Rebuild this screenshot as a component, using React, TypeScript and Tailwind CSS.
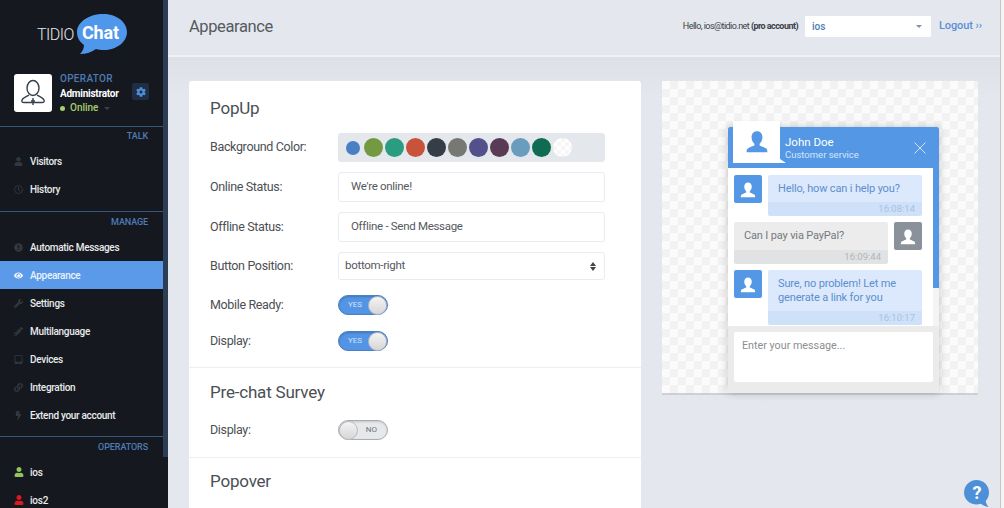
import { FaUser, FaRegClock, FaExclamationCircle, FaEye, FaWrench, FaPencilAlt, FaTabletAlt, FaLink, FaBolt, FaCog } from "react-icons/fa";
import type { ReactNode } from "react";

const font = "font-['Roboto',sans-serif]";

function Section({ title, children, border }: { title: string; children: ReactNode; border: string }) {
  return (
    <div className={border}>
      <div className="h-5 flex items-center justify-end pr-[15px] text-[9px] font-medium text-[#4f7bb5] tracking-[-0.1px]">{title}</div>
      {children}
    </div>
  );
}

function NavItem({ icon, label, active }: { icon: ReactNode; label: string; active?: boolean }) {
  return (
    <div className={`h-7 flex items-center pl-[14px] text-[10px] tracking-[-0.3px] font-medium ${active ? "bg-[#5b9ae8] text-[#eaf2fd]" : "text-[#e8eaec]"}`}>
      <span className={`w-4 flex justify-start text-[9px] ${active ? "text-white" : "text-[#33383f]"}`}>{icon}</span>
      {label}
    </div>
  );
}

function PersonGlyph({ className }: { className: string }) {
  return (
    <svg viewBox="0 0 24 24" className={className} fill="currentColor">
      <path d="M12 2c-3.200 0-5 2.400-5 5.600 0 2.400 1 4.600 2.600 5.900v1.700c-2.300 1-5.400 1.900-6.600 3.300-.6.800-.6 2.500-.6 3h19.200c0-.5 0-2.200-.6-3-1.200-1.400-4.300-2.300-6.600-3.300v-1.700C15.900 12.200 17 10 17 7.600 17 4.400 15.200 2 12 2z" />
    </svg>
  );
}

function Row({ label, children, className }: { label: string; children: ReactNode; className: string }) {
  return (
    <div className={`flex items-center ${className}`}>
      <div className="w-[128px] text-[12.5px] tracking-[-0.35px] text-[#4b4f54]">{label}</div>
      {children}
    </div>
  );
}

function Field({ children, className = "" }: { children: ReactNode; className?: string }) {
  return (
    <div className={`w-[267px] flex items-center bg-white border border-[#e9ebee] rounded-[3px] text-[11.5px] tracking-[-0.3px] text-[#55595e] ${className}`}>
      {children}
    </div>
  );
}

function Toggle({ on }: { on: boolean }) {
  return on ? (
    <div className="w-[50px] h-[20px] rounded-full bg-[#5494e4] border border-[#4a80c4] flex items-center justify-between pl-[9px] shadow-[inset_0_1px_2px_rgba(0,0,0,0.2)]">
      <span className="text-[8px] text-[#cfe1f8]">YES</span>
      <span className="w-[19px] h-[19px] rounded-full bg-gradient-to-b from-[#f4f4f4] to-[#d6d6d6] border border-[#b8bcc2]" />
    </div>
  ) : (
    <div className="w-[50px] h-[20px] rounded-full bg-[#e6e8eb] border border-[#a9adb2] flex items-center justify-between pr-[10px] shadow-[inset_0_1px_2px_rgba(0,0,0,0.15)]">
      <span className="w-[19px] h-[19px] rounded-full bg-gradient-to-b from-[#f4f4f4] to-[#d6d6d6] border border-[#b8bcc2]" />
      <span className="text-[8px] text-[#70757b]">NO</span>
    </div>
  );
}

function Bubble({ side, time, lines, top, strip }: { side: "blue" | "gray"; time: string; lines: string[]; top: string; strip: string }) {
  const blue = side === "blue";
  return (
    <div className={`flex gap-[6px] ${blue ? "" : "flex-row-reverse"}`}>
      <div className={`w-7 h-7 shrink-0 rounded-[2px] flex items-end justify-center ${blue ? "bg-[#5497e5]" : "bg-[#8a919b]"}`}>
        <PersonGlyph className="w-[18px] h-[20px] text-white mb-[3px]" />
      </div>
      <div className="w-[154px] rounded-[2px] overflow-hidden">
        <div className={`${top} pl-[10px] flex flex-col justify-center text-[11px] tracking-[-0.15px] leading-[14px] ${blue ? "bg-[#dce8fb] text-[#5b8fcf] pt-[1px]" : "bg-[#ececec] text-[#75797e]"}`}>
          {lines.map((l) => (
            <div key={l}>{l}</div>
          ))}
        </div>
        <div className={`${strip} flex items-center justify-end pr-[7px] text-[9.5px] ${blue ? "bg-[#cfe0f9] text-[#a6c2e6]" : "bg-[#e0e2e4] text-[#b2b5b8]"}`}>{time}</div>
      </div>
    </div>
  );
}

const swatches = ["#739a42", "#2a9c80", "#c9523a", "#353d47", "#787873", "#54508c", "#5a3b55", "#6a9cbd", "#0f6b51"];

export default function App() {
  return (
    <div className={`${font} relative w-[1004px] h-[508px] overflow-hidden flex bg-[#e4e8ee]`}>
      {/* Sidebar */}
      <aside className="w-[168px] h-full shrink-0 flex bg-[#15191f] overflow-hidden">
        <div className="w-[163px] shrink-0">
          <div className="h-[127px] border-b border-[#35567e] pl-[14px]">
            <div className="h-[74px] flex items-start pl-[23px] pt-[14px]">
              <span className="text-[16px] font-light text-[#e6e8ea] mt-[9px] tracking-[-0.5px] w-[40px]">TIDIO</span>
              <div className="relative w-[50px] h-[42px]">
                <svg viewBox="0 0 50 42" className="absolute inset-0 w-full h-full">
                  <path d="M26 0c13 0 24 7.500 24 18S39 36 27 36c-3 0-6-.3-8-1-4 3-10 5-16 5 2-2 4-5 4-9C3 28 0 24 0 18 0 7.500 13 0 26 0z" fill="#4f97ea" />
                </svg>
                <span className="absolute left-[5px] top-[7px] text-[18px] font-bold text-white leading-[24px] tracking-[-0.2px]">Chat</span>
              </div>
            </div>
            <div className="flex items-start">
              <div className="w-[38px] h-[38px] bg-white rounded-[3px] flex items-center justify-center">
                <svg viewBox="0 0 30 30" className="w-[30px] h-[30px]" fill="none" stroke="#33414f" strokeWidth="1.4">
                  <ellipse cx="15" cy="10" rx="6" ry="7.500" />
                  <path d="M11 17c-2 1.500-6 2.500-7 5-.5 1.500 0 2.500 2 2.500h18c2 0 2.500-1 2-2.500-1-2.500-5-3.500-7-5" />
                  <path d="M15 20v7M13 23h4" />
                </svg>
              </div>
              <div className="ml-2 w-[62px] -mt-[2px] leading-[14.5px]">
                <div className="text-[10px] font-medium text-[#4f7bb5] tracking-[0.3px]">OPERATOR</div>
                <div className="text-[10px] font-bold text-white tracking-[-0.25px]">Administrator</div>
                <div className="flex items-center text-[10px] font-medium text-[#a6cf6e]">
                  <span className="w-[5px] h-[5px] rounded-full bg-[#a6cf6e] mr-[5px]" />
                  Online
                  <span className="ml-[6px] w-0 h-0 border-x-[3px] border-x-transparent border-t-[3px] border-t-[#3c4148]" />
                </div>
              </div>
              <div className="ml-[10px] mt-[9px] w-[17px] h-[17px] rounded-[2px] bg-[#1f2e42] flex items-center justify-center text-[#4f8fd9] text-[10px]">
                <FaCog />
              </div>
            </div>
          </div>
          <Section title="TALK" border="border-b border-[#35567e] pb-2">
            <NavItem icon={<FaUser />} label="Visitors" />
            <NavItem icon={<FaRegClock />} label="History" />
          </Section>
          <Section title="MANAGE" border="border-b border-[#35567e] pt-[1px] pb-[7px]">
            <NavItem icon={<FaExclamationCircle />} label="Automatic Messages" />
            <NavItem active icon={<FaEye />} label="Appearance" />
            <NavItem icon={<FaWrench />} label="Settings" />
            <NavItem icon={<FaPencilAlt />} label="Multilanguage" />
            <NavItem icon={<FaTabletAlt />} label="Devices" />
            <NavItem icon={<FaLink />} label="Integration" />
            <NavItem icon={<FaBolt />} label="Extend your account" />
          </Section>
          <Section title="OPERATORS" border="pt-[1px]">
            <div className="h-7 flex items-center pl-[14px] text-[10px] tracking-[-0.2px] font-medium text-[#e8eaec]">
              <FaUser className="text-[10px] text-[#94c25c] mr-[6px]" />
              ios
            </div>
            <div className="h-7 flex items-center pl-[14px] text-[10px] tracking-[-0.2px] font-medium text-[#e8eaec]">
              <FaUser className="text-[10px] text-[#e0181c] mr-[6px]" />
              ios2
            </div>
          </Section>
        </div>
        <div className="w-[5px] h-[457px] bg-[#2b3e55]" />
      </aside>

      {/* Main */}
      <main className="flex-1 h-full overflow-hidden bg-[#e4e8ee]">
        <header className="h-[57px] border-b-2 border-[#f0f2f5] bg-[#e4e8ee] flex items-center pl-[21px] pb-[2px]">
          <h1 className="text-[16.5px] tracking-[-0.4px] text-[#555a60] flex-1 mt-[2px]">Appearance</h1>
          <div className="text-[9px] tracking-[-0.55px] text-[#3b4046] mr-[7px]">
            Hello, ios@tidio.net <b className="font-bold">(pro account)</b>
          </div>
          <div className="w-[126px] h-[21px] bg-white rounded-[1px] flex items-center pl-[7px] pr-[9px] text-[10px] text-[#4f7bb5] font-medium justify-between">
            ios
            <span className="w-0 h-0 border-x-[3px] border-x-transparent border-t-[3px] border-t-[#7d93ad]" />
          </div>
          <div className="ml-[8px] mr-[23px] text-[11px] font-medium text-[#5a90d4] w-[42px] whitespace-nowrap tracking-[-0.1px]">Logout ››</div>
        </header>
        <div className="flex gap-[21px] pl-[21px] pt-[24px] h-[451px] bg-gradient-to-b from-[#dde1e7] to-[#e4e8ee] to-[40px]">
          {/* Card */}
          <section className="w-[452px] h-[440px] shrink-0 bg-white rounded-t-[3px] pt-[17px]">
            <div className="pl-[21px]">
              <h2 className="text-[17px] leading-5 tracking-[-0.2px] text-[#4b4f54]">PopUp</h2>
              <Row label="Background Color:" className="mt-[15px] h-[29px]">
                <div className="w-[267px] h-[29px] bg-[#e4e7eb] rounded-[3px] flex items-center pl-[8px] gap-[2px]">
                  <span className="w-[14px] h-[14px] rounded-full bg-[#4a7fc4] mr-[2px]" />
                  {swatches.map((c) => (
                    <span key={c} className="w-[19px] h-[19px] rounded-full" style={{ backgroundColor: c }} />
                  ))}
                  <span className="w-[19px] h-[19px] rounded-full bg-[conic-gradient(#fff_25%,#f6f6f6_0_50%,#fff_0_75%,#f6f6f6_0)] bg-[length:8px_8px]" />
                </div>
              </Row>
              <Row label="Online Status:" className="mt-[10px]">
                <Field className="h-[30px] pl-3">We're online!</Field>
              </Row>
              <Row label="Offline Status:" className="mt-[10px]">
                <Field className="h-[30px] pl-3">Offline - Send Message</Field>
              </Row>
              <Row label="Button Position:" className="mt-[10px]">
                <Field className="h-[28px] pl-[6px] pr-2 justify-between">
                  bottom-right
                  <span className="flex flex-col gap-[1px]">
                    <span className="w-0 h-0 border-x-[3px] border-x-transparent border-b-[4px] border-b-[#444]" />
                    <span className="w-0 h-0 border-x-[3px] border-x-transparent border-t-[4px] border-t-[#444]" />
                  </span>
                </Field>
              </Row>
              <Row label="Mobile Ready:" className="mt-[15px]">
                <Toggle on />
              </Row>
              <Row label="Display:" className="mt-4">
                <Toggle on />
              </Row>
            </div>
            <div className="mt-4 border-t border-[#eceef0] pl-[21px] pt-[14px]">
              <h2 className="text-[17px] leading-5 tracking-[-0.2px] text-[#4b4f54]">Pre-chat Survey</h2>
              <Row label="Display:" className="mt-[18px]">
                <Toggle on={false} />
              </Row>
            </div>
            <div className="mt-[17px] border-t border-[#eceef0] pl-[21px] pt-[13px]">
              <h2 className="text-[17px] leading-5 tracking-[-0.2px] text-[#4b4f54]">Popover</h2>
            </div>
          </section>

          {/* Preview */}
          <section className="w-[316px] h-[314px] shrink-0 rounded-t-[2px] border-b-2 border-[#ccd0d5] bg-[#fafafa] bg-[conic-gradient(#f2f2f2_25%,#fbfbfb_0_50%,#f2f2f2_0_75%,#fbfbfb_0)] bg-[length:16px_16px] pt-[46px] pl-[66px]">
            <div className="w-[211px] h-[266px] shadow-[0_0_8px_rgba(0,0,0,0.22)] flex flex-col relative">
              <div className="h-[41px] shrink-0 bg-[#5497e5] rounded-t-[2px] flex items-center pl-[57px]">
                <div className="flex-1">
                  <div className="text-[11.5px] leading-[13px] text-white">John Doe</div>
                  <div className="text-[9.5px] leading-[11px] text-[#d5e5fa]">Customer service</div>
                </div>
                <svg viewBox="0 0 12 12" className="w-[12px] h-[12px] mr-[13px]" stroke="#cfe1f8" strokeWidth="1">
                  <path d="M0.500 0.500L11.500 11.500M11.500 0.500L0.500 11.500" />
                </svg>
              </div>
              <div className="absolute left-[5px] -top-[6px] w-[47px] h-[42px] bg-white flex items-center justify-center">
                <PersonGlyph className="w-[26px] h-[30px] text-[#5497e5]" />
                <span className="absolute left-full bottom-0 w-0 h-0 border-b-[4px] border-b-white border-r-[6px] border-r-transparent" />
              </div>
              <div className="flex h-[158px] shrink-0">
                <div className="w-[205px] bg-white pl-[6px] pr-[11px] pt-[7px] flex flex-col gap-[6px] overflow-hidden">
                  <Bubble side="blue" time="16:08:14" lines={["Hello, how can i help you?"]} top="h-[27px]" strip="h-[14px]" />
                  <Bubble side="gray" time="16:09:44" lines={["Can I pay via PayPal?"]} top="h-[28px]" strip="h-[14px]" />
                  <Bubble side="blue" time="16:10:17" lines={["Sure, no problem! Let me", "generate a link for you"]} top="h-[41px]" strip="h-[14px]" />
                </div>
                <div className="w-[6px] bg-[#f4f4f4]">
                  <div className="h-[120px] bg-[#5497e5]" />
                </div>
              </div>
              <div className="flex-1 bg-[#ebebeb] pl-[6px] pr-[6px] pt-[6px]">
                <div className="h-[50px] bg-white rounded-[2px] pl-2 pt-[6px] text-[10.75px] text-[#8b8e92]">Enter your message...</div>
              </div>
            </div>
          </section>
        </div>
      </main>

      {/* Page scrollbar */}
      <div className="absolute right-0 top-0 w-[4px] h-full bg-[#f4f4f4] border-l border-[#c4c6c9]" />
      {/* Help */}
      <div className="absolute left-[964px] top-[480px] w-[26px] h-[28px] flex items-start justify-center">
        <svg viewBox="0 0 26 28" className="absolute inset-0 w-full h-full">
          <path d="M12.500 0C19.500 0 25 5.300 25 12.500c0 3.500-1.300 6.500-3.300 8.600.3 2 1.300 4 2.800 5.900-3-.5-5.800-1.800-7.800-3.300-1.300.5-2.700.8-4.200.8C5.500 24.500 0 19.200 0 12.500S5.500 0 12.500 0z" fill="#4e90d8" />
        </svg>
        <span className="relative text-[18px] leading-[25px] font-bold text-white">?</span>
      </div>
    </div>
  );
}
